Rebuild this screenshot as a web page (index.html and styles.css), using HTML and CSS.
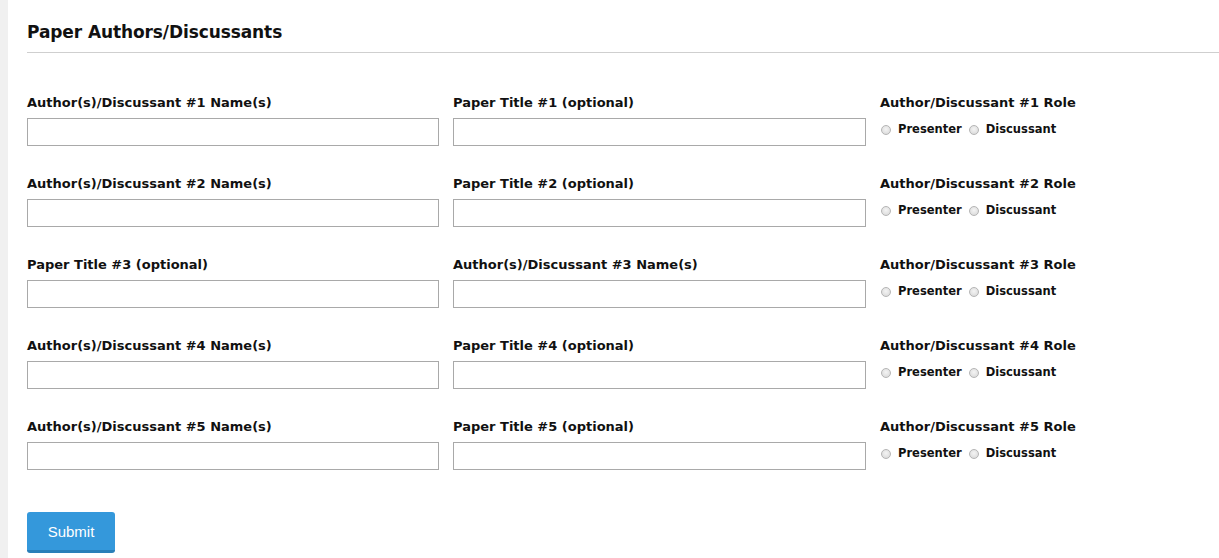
FILE: index.html
```html
<!DOCTYPE html>
<html>
<head>
<meta charset="utf-8">
<link rel="stylesheet" href="styles.css">
</head>
<body>
<div class="page">
  <h2 class="section-title">Paper Authors/Discussants</h2>
  <form class="form">
    <div class="row">
      <div class="field"><label class="lbl">Author(s)/Discussant #1 Name(s)</label><input class="txt" type="text"></div>
      <div class="field"><label class="lbl">Paper Title #1 (optional)</label><input class="txt" type="text"></div>
      <div class="field"><label class="lbl">Author/Discussant #1 Role</label>
        <div class="radios"><label class="opt"><input class="rad" type="radio" name="r1">Presenter</label><label class="opt"><input class="rad" type="radio" name="r1">Discussant</label></div></div>
    </div>
    <div class="row">
      <div class="field"><label class="lbl">Author(s)/Discussant #2 Name(s)</label><input class="txt" type="text"></div>
      <div class="field"><label class="lbl">Paper Title #2 (optional)</label><input class="txt" type="text"></div>
      <div class="field"><label class="lbl">Author/Discussant #2 Role</label>
        <div class="radios"><label class="opt"><input class="rad" type="radio" name="r2">Presenter</label><label class="opt"><input class="rad" type="radio" name="r2">Discussant</label></div></div>
    </div>
    <div class="row">
      <div class="field"><label class="lbl">Paper Title #3 (optional)</label><input class="txt" type="text"></div>
      <div class="field"><label class="lbl">Author(s)/Discussant #3 Name(s)</label><input class="txt" type="text"></div>
      <div class="field"><label class="lbl">Author/Discussant #3 Role</label>
        <div class="radios"><label class="opt"><input class="rad" type="radio" name="r3">Presenter</label><label class="opt"><input class="rad" type="radio" name="r3">Discussant</label></div></div>
    </div>
    <div class="row">
      <div class="field"><label class="lbl">Author(s)/Discussant #4 Name(s)</label><input class="txt" type="text"></div>
      <div class="field"><label class="lbl">Paper Title #4 (optional)</label><input class="txt" type="text"></div>
      <div class="field"><label class="lbl">Author/Discussant #4 Role</label>
        <div class="radios"><label class="opt"><input class="rad" type="radio" name="r4">Presenter</label><label class="opt"><input class="rad" type="radio" name="r4">Discussant</label></div></div>
    </div>
    <div class="row">
      <div class="field"><label class="lbl">Author(s)/Discussant #5 Name(s)</label><input class="txt" type="text"></div>
      <div class="field"><label class="lbl">Paper Title #5 (optional)</label><input class="txt" type="text"></div>
      <div class="field"><label class="lbl">Author/Discussant #5 Role</label>
        <div class="radios"><label class="opt"><input class="rad" type="radio" name="r5">Presenter</label><label class="opt"><input class="rad" type="radio" name="r5">Discussant</label></div></div>
    </div>
    <div class="actions"><button class="submit" type="button">Submit</button></div>
  </form>
</div>
</body>
</html>
```
FILE: styles.css
```css
html, body {
  margin: 0;
  padding: 0;
  height: 100%;
  overflow: hidden;
}
body {
  background: #f0f0f0;
  font-family: "DejaVu Sans", Verdana, sans-serif;
  color: #111;
}
.page {
  margin-left: 8px;
  background: #fff;
  min-height: 100%;
  padding: 0 0 0 19px;
}
.section-title {
  margin: 0;
  padding-top: 22px;
  font-size: 17px;
  line-height: 20px;
  font-weight: bold;
  padding-bottom: 10px;
  border-bottom: 1px solid #cfcfcf;
  letter-spacing: -0.1px;
}
.form {
  padding-top: 40px;
}
.row {
  display: grid;
  grid-template-columns: 412px 413px 1fr;
  column-gap: 14px;
  height: 81px;
}
.field {
  display: flex;
  flex-direction: column;
}
.lbl {
  font-size: 13px;
  font-weight: bold;
  line-height: 20px;
  height: 25px;
}
.txt {
  box-sizing: border-box;
  width: 100%;
  height: 28px;
  margin: 0;
  border: 1px solid #a9a9a9;
  background: #fff;
  padding: 0 4px;
}
.radios {
  display: flex;
  align-items: center;
  font-size: 11.5px;
  font-weight: bold;
  line-height: 18px;
  padding-top: 2px;
}
.opt {
  display: flex;
  align-items: center;
  margin-right: 6px;
}
.rad {
  appearance: none;
  -webkit-appearance: none;
  width: 10px;
  height: 10px;
  border-radius: 50%;
  border: 1px solid #b5b5b5;
  background: radial-gradient(circle at 50% 40%, #f4f4f4 0%, #dcdcdc 80%);
  margin: 1px 7px 0 1px;
  box-sizing: border-box;
}
.actions {
  padding-top: 14px;
}
.submit {
  width: 88px;
  height: 41px;
  background: #3498db;
  border: none;
  border-bottom: 3px solid #2a7fb8;
  border-radius: 3px;
  color: #fff;
  font-family: "Liberation Sans", Arial, sans-serif;
  font-size: 15px;
  padding: 0;
}
```
